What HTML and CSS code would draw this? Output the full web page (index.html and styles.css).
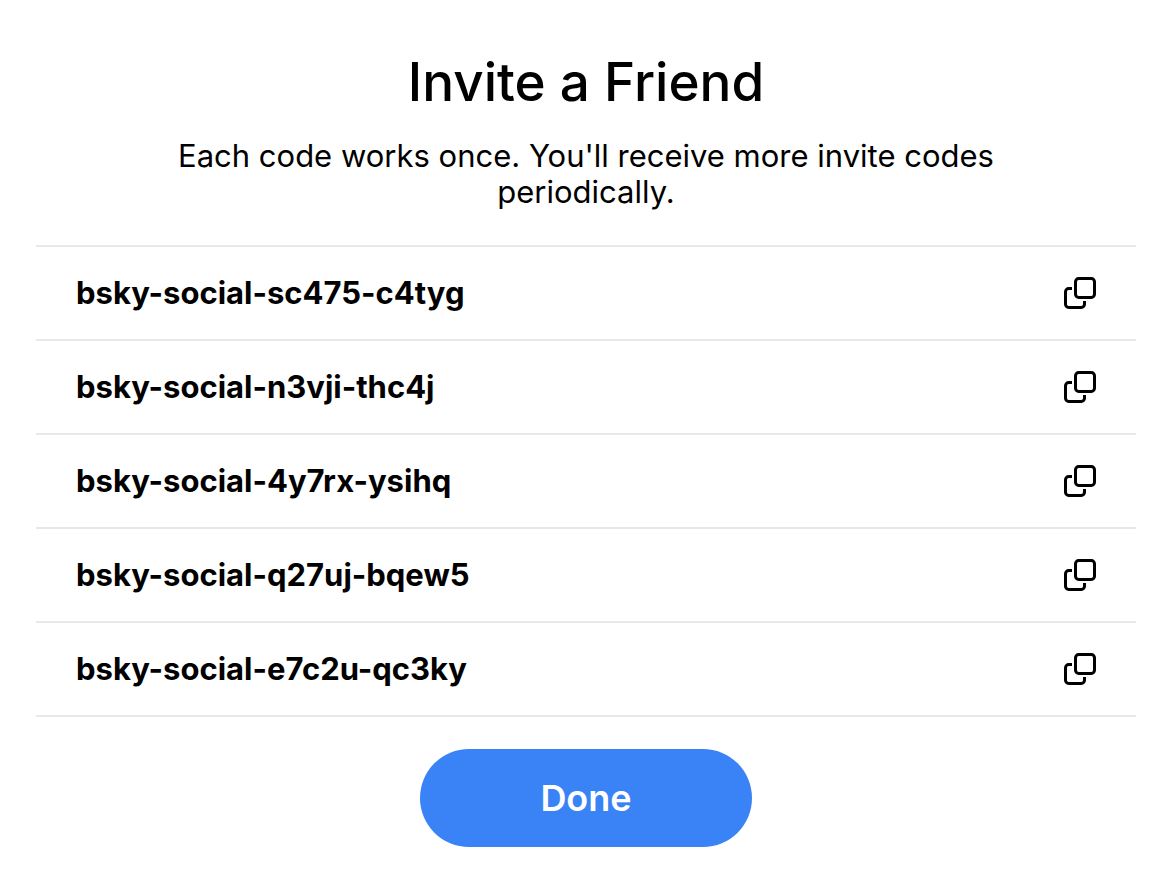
FILE: index.html
```html
<!DOCTYPE html>
<html lang="en">
<head>
<meta charset="utf-8">
<title>Invite a Friend</title>
<link rel="stylesheet" href="styles.css">
</head>
<body>
<svg class="defs" aria-hidden="true">
  <symbol id="copy" viewBox="0 0 34 34">
    <rect x="13.5" y="2.5" width="19" height="19" rx="3.2"/>
    <path d="M10 12.5H6.7a3.2 3.2 0 0 0-3.2 3.2v12.6a3.2 3.2 0 0 0 3.2 3.2h12.6a3.2 3.2 0 0 0 3.2-3.2v-3.3"/>
  </symbol>
</svg>
<main class="invite">
  <h1 class="title">Invite a Friend</h1>
  <p class="description">Each code works once. You'll receive more invite codes periodically.</p>
  <ul class="codes">
    <li class="code"><span>bsky-social-sc475-c4tyg</span><button class="copy" type="button" aria-label="Copy bsky-social-sc475-c4tyg"><svg class="icon"><use href="#copy"/></svg></button></li>
    <li class="code"><span>bsky-social-n3vji-thc4j</span><button class="copy" type="button" aria-label="Copy bsky-social-n3vji-thc4j"><svg class="icon"><use href="#copy"/></svg></button></li>
    <li class="code"><span>bsky-social-4y7rx-ysihq</span><button class="copy" type="button" aria-label="Copy bsky-social-4y7rx-ysihq"><svg class="icon"><use href="#copy"/></svg></button></li>
    <li class="code"><span>bsky-social-q27uj-bqew5</span><button class="copy" type="button" aria-label="Copy bsky-social-q27uj-bqew5"><svg class="icon"><use href="#copy"/></svg></button></li>
    <li class="code"><span>bsky-social-e7c2u-qc3ky</span><button class="copy" type="button" aria-label="Copy bsky-social-e7c2u-qc3ky"><svg class="icon"><use href="#copy"/></svg></button></li>
  </ul>
  <button class="done" type="button">Done</button>
</main>
</body>
</html>
```
FILE: styles.css
```css
* { box-sizing: border-box; }
body {
  margin: 0;
  background: #fff;
  color: #000;
  font-family: Inter, "Liberation Sans", sans-serif;
}
.defs { position: absolute; width: 0; height: 0; }
.invite {
  display: flex;
  flex-direction: column;
  align-items: center;
  padding: 48px 26px 32px 36px;
}
.title {
  margin: 0;
  font-size: 53px;
  line-height: 68px;
  font-weight: 500;
}
.description {
  max-width: 860px;
  margin: 22px 0 35px;
  font-size: 31px;
  line-height: 36px;
  text-align: center;
}
.codes {
  align-self: stretch;
  margin: 0;
  padding: 0;
  list-style: none;
  border-bottom: 2px solid #e9e8e9;
}
.code {
  display: flex;
  align-items: center;
  justify-content: space-between;
  padding: 29px 40px;
  border-top: 2px solid #e9e8e9;
  font-size: 31px;
  line-height: 34px;
  font-weight: 700;
}
.copy {
  display: flex;
  padding: 0;
  border: 0;
  background: none;
  color: inherit;
  cursor: pointer;
}
.icon {
  width: 34px;
  height: 34px;
  fill: none;
  stroke: currentColor;
  stroke-width: 3;
}
.done {
  margin-top: 32px;
  padding: 28px 120px;
  border: 0;
  border-radius: 49px;
  background: #3a83f7;
  color: #fff;
  font: inherit;
  font-size: 36px;
  line-height: 42px;
  font-weight: 600;
  cursor: pointer;
}
```
